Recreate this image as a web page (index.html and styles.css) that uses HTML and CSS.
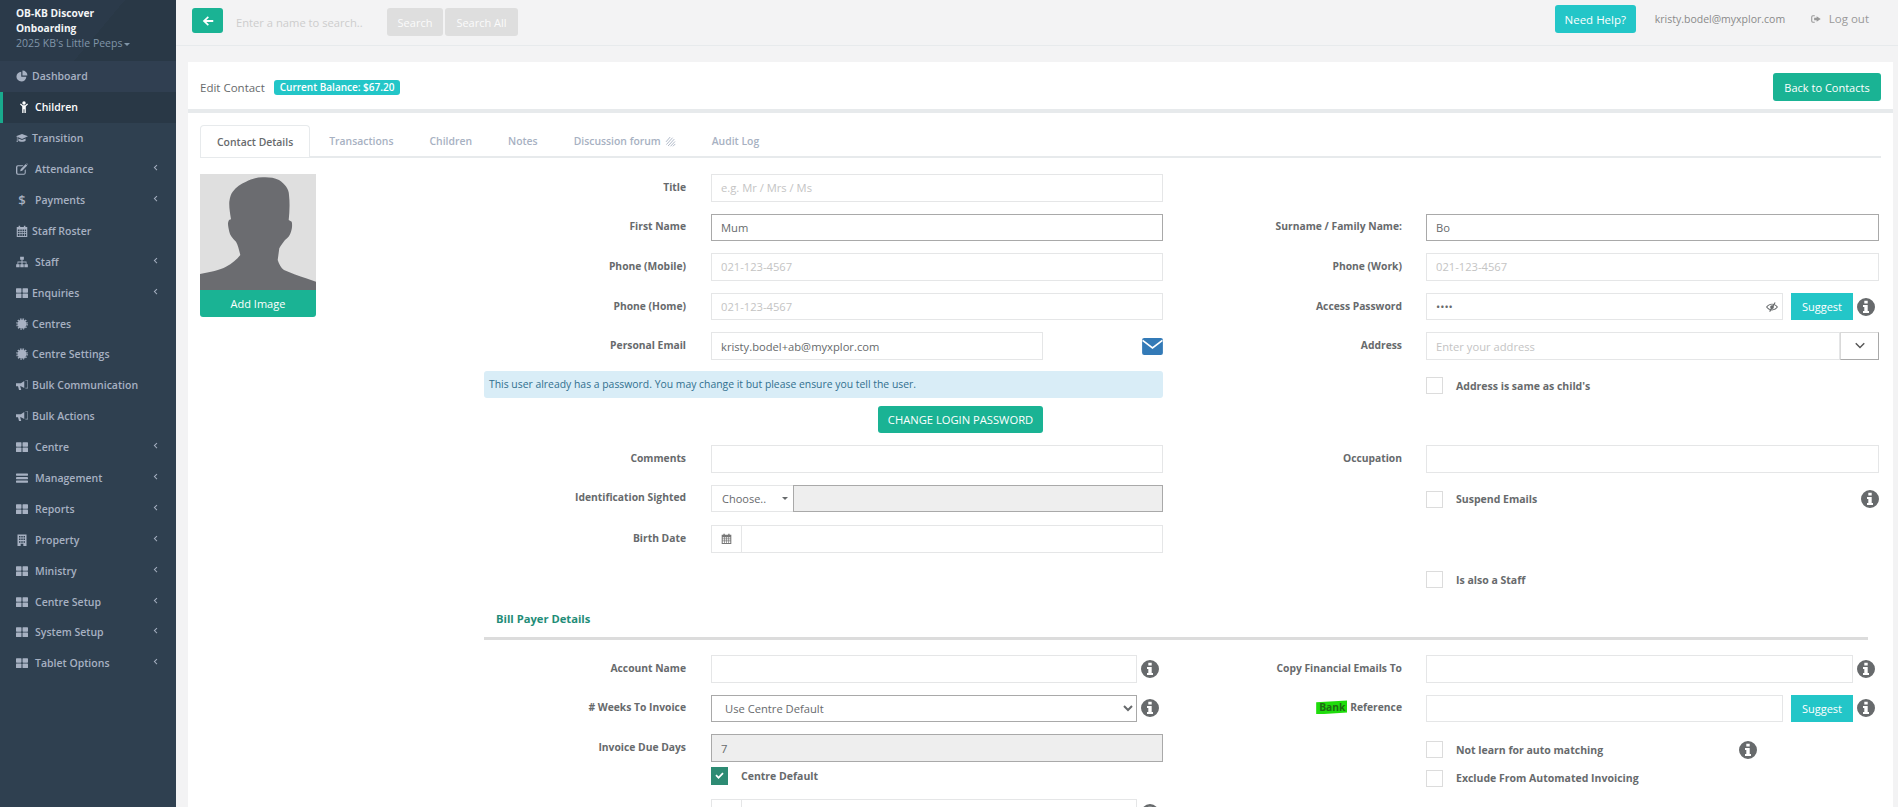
FILE: index.html
```html
<!DOCTYPE html>
<html lang="en">
<head>
<meta charset="utf-8">
<title>Edit Contact</title>
<link rel="stylesheet" href="styles.css">
</head>
<body>
<svg class="sprite" width="0" height="0" aria-hidden="true">
  <symbol id="i-pie" viewBox="0 0 16 16"><path d="M7 2.2a6.6 6.6 0 1 0 6.8 6.8H7z"/><path d="M8.6 .8v6.6h6.6A6.6 6.6 0 0 0 8.6 .8z"/></symbol>
  <symbol id="i-child" viewBox="0 0 16 16"><circle cx="8" cy="2.6" r="2.3"/><path d="M2.6 4.4l1.2-1.1 2.6 2.2h3.2l2.6-2.2 1.2 1.1-3 3V16H8.6v-5H7.4v5H5.6V7.4z"/></symbol>
  <symbol id="i-cap" viewBox="0 0 16 16"><path d="M8 2.5L0 5.8l8 3.4 8-3.4z"/><path d="M3.2 8.6v3c1.8 1.9 7.8 1.9 9.6 0v-3L8 10.7z"/><path d="M1.2 6.6h.8V11l.5 2.2H.7L1.2 11z"/></symbol>
  <symbol id="i-edit" viewBox="0 0 16 16"><path fill-rule="evenodd" d="M2.5 3H10L8.6 4.4H2.8A1 1 0 0 0 1.8 5.4v7.8a1 1 0 0 0 1 1h7.8a1 1 0 0 0 1-1V9.8l1.4-1.4v5A2.5 2.5 0 0 1 10.5 15.6h-8A2.5 2.5 0 0 1 0 13.100V5.500A2.500 2.500 0 0 1 2.500 3z"/><path d="M13 1.400l2 2-6.700 6.800-2.700.7.600-2.700zM13.800.700l.7-.5 1.300 1.300-.5.8z"/></symbol>
  <symbol id="i-cal" viewBox="0 0 16 16"><path fill-rule="evenodd" d="M1 2.500h2.500V1h2v1.500h5V1h2v1.500H15V16H1zM2.500 6v2h2.200V6zm3.200 0v2h2V6zm3 0v2h2V6zm3 0v2h1.800V6zm-9.200 3v2h2.200V9zm3.200 0v2h2V9zm3 0v2h2V9zm3 0v2h1.800V9zm-9.200 3v2.500h2.200V12zm3.200 0v2.500h2V12zm3 0v2.500h2V12zm3 0v2.500h1.800V12z"/></symbol>
  <symbol id="i-map" viewBox="0 0 16 16"><path d="M5.500 1h5v4h-1.800v2.300H14V11h1.800v4h-4.600v-4H13V8.500H8.700V11h1.600v4H5.700v-4h1.600V8.500H3V11h1.800v4H.2v-4H2V7.300h5.300V5H5.500z"/></symbol>
  <symbol id="i-grid" viewBox="0 0 16 16"><rect x="0" y="1.500" width="7.300" height="6" rx=".8"/><rect x="8.700" y="1.500" width="7.300" height="6" rx=".8"/><rect x="0" y="8.800" width="7.300" height="6" rx=".8"/><rect x="8.700" y="8.800" width="7.300" height="6" rx=".8"/></symbol>
  <symbol id="i-bars" viewBox="0 0 16 16"><rect y="2" width="16" height="3" rx=".6"/><rect y="6.700" width="16" height="3" rx=".6"/><rect y="11.400" width="16" height="3" rx=".6"/></symbol>
  <symbol id="i-cert" viewBox="0 0 16 16"><circle cx="8" cy="8" r="6"/><circle cx="8" cy="8" r="6.800" fill="none" stroke="currentColor" stroke-width="1.800" stroke-dasharray="2 1.560"/></symbol>
  <symbol id="i-horn" viewBox="0 0 16 16"><path d="M0 5.500h6.500L11 2.500v9.500L6.500 9.500H5.500L7 14.500H4L2.700 9.500H0z"/><path d="M12.500 1.500v.9l2.700 0v9.200h-2.700v.9H16V1.500z" opacity=".85"/></symbol>
  <symbol id="i-build" viewBox="0 0 16 16"><path fill-rule="evenodd" d="M2 .5h12V16H9.800v-3H6.200v3H2zM4 2.500v2h2v-2zm3 0v2h2v-2zm3 0v2h2v-2zM4 6v2h2V6zm3 0v2h2V6zm3 0v2h2V6zM4 9.500v2h2v-2zm3 0v2h2v-2zm3 0v2h2v-2z"/></symbol>
  <symbol id="i-out" viewBox="0 0 16 16"><path d="M6 3.500H3.200A1.200 1.200 0 0 0 2 4.700v6.600a1.200 1.200 0 0 0 1.200 1.200H6v1.500H3A2.800 2.800 0 0 1 .3 11.200V4.800A2.800 2.800 0 0 1 3 2H6z"/><path d="M9 3.500L15.500 8 9 12.500V10H5V6h4z"/></symbol>
  <symbol id="i-back" viewBox="0 0 16 16"><path d="M7.700 1.800l1.500 1.500L5.800 6.700H15v2.600H5.800l3.400 3.400-1.500 1.500L1 8z"/></symbol>
  <symbol id="i-mail" viewBox="0 0 22 18"><rect width="22" height="18" rx="2.200"/><path d="M.5 2.500L11 10.500 21.500 2.500" fill="none" stroke="#fff" stroke-width="1.800"/></symbol>
  <symbol id="i-info" viewBox="0 0 18 18"><path fill-rule="evenodd" d="M9 0a9 9 0 1 1 0 18A9 9 0 0 1 9 0zM7.300 2.800v2.600h3.400V2.800zM6 7v2h1.300v4H6v2h6v-2h-1.300V7z"/></symbol>
  <symbol id="i-eye" viewBox="0 0 16 16"><path fill-rule="evenodd" d="M8 3.500c3.400 0 6.300 2 8 4.500-1.700 2.500-4.600 4.500-8 4.500S1.700 10.500 0 8c1.700-2.500 4.600-4.500 8-4.500zm0 1.300C5.600 4.800 3.300 6.100 1.700 8c1.600 1.900 3.900 3.200 6.300 3.200S12.700 9.900 14.300 8C12.700 6.100 10.400 4.800 8 4.800z"/><path d="M11.500 1.500l1.300.8-7.300 12.200-1.300-.8z"/><circle cx="8" cy="8" r="2.500"/></symbol>
  <symbol id="i-down" viewBox="0 0 16 16"><path d="M2 2.800L8 8.600l6-5.800 1.600 1.600L8 12 .4 4.400z"/></symbol>
  <symbol id="i-check" viewBox="0 0 16 16"><path d="M2 8.300l1.800-1.800 2.800 2.800L12.200 3.500 14 5.300 6.600 13z"/></symbol>
  <symbol id="i-print" viewBox="0 0 16 16"><g fill="none" stroke="currentColor" stroke-width="1.300"><path d="M1.500 8.500l6-7"/><path d="M2 12.500L11 2.500"/><path d="M4.500 14.500l9-10"/><path d="M8 15l6.500-7"/><path d="M11.500 15l3.500-3.500"/></g></symbol>
</svg>

<div class="app">
  <aside class="sidebar">
    <div class="brand">
      <div class="brand-name">OB-KB Discover<br>Onboarding</div>
      <div class="brand-centre">2025 KB's Little Peeps<span class="caret caret-light"></span></div>
    </div>
    <nav class="nav">
      <a class="nav-item nav-first"><svg class="nav-icon"><use href="#i-pie"/></svg><span>Dashboard</span></a>
      <a class="nav-item nav-current"><svg class="nav-icon nav-icon-child"><use href="#i-child"/></svg><span>Children</span></a>
      <a class="nav-item"><svg class="nav-icon"><use href="#i-cap"/></svg><span>Transition</span></a>
      <a class="nav-item nav-sub"><svg class="nav-icon"><use href="#i-edit"/></svg><span>Attendance</span><i class="nav-arrow"></i></a>
      <a class="nav-item nav-sub"><span class="nav-glyph">$</span><span>Payments</span><i class="nav-arrow"></i></a>
      <a class="nav-item"><svg class="nav-icon"><use href="#i-cal"/></svg><span>Staff Roster</span></a>
      <a class="nav-item nav-sub"><svg class="nav-icon"><use href="#i-map"/></svg><span>Staff</span><i class="nav-arrow"></i></a>
      <a class="nav-item"><svg class="nav-icon"><use href="#i-grid"/></svg><span>Enquiries</span><i class="nav-arrow"></i></a>
      <a class="nav-item"><svg class="nav-icon"><use href="#i-cert"/></svg><span>Centres</span></a>
      <a class="nav-item"><svg class="nav-icon"><use href="#i-cert"/></svg><span>Centre Settings</span></a>
      <a class="nav-item"><svg class="nav-icon"><use href="#i-horn"/></svg><span>Bulk Communication</span></a>
      <a class="nav-item"><svg class="nav-icon"><use href="#i-horn"/></svg><span>Bulk Actions</span></a>
      <a class="nav-item nav-sub"><svg class="nav-icon"><use href="#i-grid"/></svg><span>Centre</span><i class="nav-arrow"></i></a>
      <a class="nav-item nav-sub"><svg class="nav-icon"><use href="#i-bars"/></svg><span>Management</span><i class="nav-arrow"></i></a>
      <a class="nav-item nav-sub"><svg class="nav-icon"><use href="#i-grid"/></svg><span>Reports</span><i class="nav-arrow"></i></a>
      <a class="nav-item nav-sub"><svg class="nav-icon"><use href="#i-build"/></svg><span>Property</span><i class="nav-arrow"></i></a>
      <a class="nav-item nav-sub"><svg class="nav-icon"><use href="#i-grid"/></svg><span>Ministry</span><i class="nav-arrow"></i></a>
      <a class="nav-item nav-sub"><svg class="nav-icon"><use href="#i-grid"/></svg><span>Centre Setup</span><i class="nav-arrow"></i></a>
      <a class="nav-item nav-sub"><svg class="nav-icon"><use href="#i-grid"/></svg><span>System Setup</span><i class="nav-arrow"></i></a>
      <a class="nav-item nav-sub"><svg class="nav-icon"><use href="#i-grid"/></svg><span>Tablet Options</span><i class="nav-arrow"></i></a>
    </nav>
  </aside>

  <div class="main">
    <header class="topbar">
      <button class="btn btn-green btn-back" type="button"><svg class="back-icon"><use href="#i-back"/></svg></button>
      <input class="top-search" type="text" placeholder="Enter a name to search..">
      <button class="btn btn-muted btn-search" type="button">Search</button>
      <button class="btn btn-muted btn-search-all" type="button">Search All</button>
      <button class="btn btn-teal btn-help" type="button">Need Help?</button>
      <span class="top-email">kristy.bodel@myxplor.com</span>
      <a class="top-logout"><svg class="logout-icon"><use href="#i-out"/></svg>Log out</a>
    </header>

    <section class="panel">
      <div class="panel-head">
        <div class="panel-title">Edit Contact <span class="balance">Current Balance: $67.20</span></div>
        <button class="btn btn-green btn-contacts" type="button">Back to Contacts</button>
      </div>
      <div class="panel-body">
        <ul class="tabs">
          <li class="tab tab-active">Contact Details</li>
          <li class="tab">Transactions</li>
          <li class="tab">Children</li>
          <li class="tab">Notes</li>
          <li class="tab">Discussion forum <svg class="tab-icon"><use href="#i-print"/></svg></li>
          <li class="tab">Audit Log</li>
        </ul>
        <div class="contact">
          <div class="photo">
            <svg class="photo-img" viewBox="0 0 116 116" aria-hidden="true">
              <rect width="116" height="116" fill="#dfdfdf"/>
              <path fill="#6b6c70" d="M0 100C10 98 20 96 26 92.700C32 90 37 85 40.300 81C39 76 38 71 36 67.700C32 64 30 61 29.300 57.700C28.500 54 27.500 50 28.300 47.700C28.800 46 30 45.300 31 45.300C30 39 29 33 29.300 27.700C30 23 31 20 32.700 17.700C36 13 41 10 46 7.700C51 5 57 3.300 62.700 3.300C68 3 74 3.500 79 6C85 10 89 15 89 21C90 30 89.500 38 88.700 46L91.700 47.700C92.500 51 92 55 91 57.700C90 61 88 64 85 66C83 69 81 71 79.300 74.300L77.700 86C79 90 81 94 84 96C91 99 99 102 106 104.300L116 107.700V116H0Z"/>
            </svg>
            <button class="btn btn-green btn-image" type="button">Add Image</button>
          </div>

          <div class="form">
            <div class="form-cols form-cols-top">
              <div class="col col-left">
                <div class="field"><label>Title</label><input type="text" placeholder="e.g. Mr / Mrs / Ms"></div>
                <div class="field"><label>First Name</label><input class="strong" type="text" value="Mum"></div>
                <div class="field"><label>Phone (Mobile)</label><input type="text" placeholder="021-123-4567"></div>
                <div class="field"><label>Phone (Home)</label><input type="text" placeholder="021-123-4567"></div>
                <div class="field field-tight"><label>Personal Email</label>
                  <div class="control">
                    <input class="email-input" type="text" value="kristy.bodel+ab@myxplor.com">
                    <svg class="mail-icon"><use href="#i-mail"/></svg>
                  </div>
                </div>
                <div class="notice">This user already has a password. You may change it but please ensure you tell the user.</div>
                <div class="password-action"><button class="btn btn-green btn-password" type="button">CHANGE LOGIN PASSWORD</button></div>
                <div class="field"><label>Comments</label><input type="text"></div>
                <div class="field field-identification"><label>Identification Sighted</label>
                  <div class="control control-joined">
                    <div class="choose">Choose..<span class="caret caret-dark"></span></div>
                    <input class="readonly" type="text" disabled>
                  </div>
                </div>
                <div class="field"><label>Birth Date</label>
                  <div class="control control-joined">
                    <span class="addon"><svg class="addon-icon"><use href="#i-cal"/></svg></span>
                    <input class="date-input" type="text">
                  </div>
                </div>
              </div>

              <div class="col col-right">
                <div class="field field-blank"></div>
                <div class="field"><label>Surname / Family Name:</label><input class="strong" type="text" value="Bo"></div>
                <div class="field"><label>Phone (Work)</label><input type="text" placeholder="021-123-4567"></div>
                <div class="field"><label>Access Password</label>
                  <div class="control">
                    <div class="password-box">
                      <input type="password" value="abcd">
                      <svg class="eye-icon"><use href="#i-eye"/></svg>
                    </div>
                    <button class="btn btn-teal btn-suggest" type="button">Suggest</button>
                    <span class="info-cell"><svg class="info-icon"><use href="#i-info"/></svg></span>
                  </div>
                </div>
                <div class="field"><label>Address</label>
                  <div class="control control-joined">
                    <input class="address-input" type="text" placeholder="Enter your address">
                    <span class="address-toggle"><svg class="down-icon"><use href="#i-down"/></svg></span>
                  </div>
                </div>
                <div class="check-row check-address"><span class="box"></span><span class="check-label">Address is same as child's</span></div>
                <div class="field field-occupation"><label>Occupation</label><input type="text"></div>
                <div class="check-row check-suspend"><span class="box"></span><span class="check-label">Suspend Emails</span><svg class="info-icon info-end"><use href="#i-info"/></svg></div>
                <div class="check-row check-staff"><span class="box"></span><span class="check-label">Is also a Staff</span></div>
              </div>
            </div>

            <h3 class="section-title">Bill Payer Details</h3>
            <hr class="section-rule">

            <div class="form-cols">
              <div class="col col-left">
                <div class="field"><label>Account Name</label>
                  <div class="control"><input type="text"><span class="info-cell"><svg class="info-icon"><use href="#i-info"/></svg></span></div>
                </div>
                <div class="field"><label># Weeks To Invoice</label>
                  <div class="control">
                    <select class="weeks"><option>Use Centre Default</option></select>
                    <span class="info-cell"><svg class="info-icon"><use href="#i-info"/></svg></span>
                  </div>
                </div>
                <div class="field field-due"><label>Invoice Due Days</label><input class="readonly" type="text" value="7" disabled></div>
                <div class="check-row check-default"><span class="box box-on"><svg class="check-icon"><use href="#i-check"/></svg></span><span class="check-label">Centre Default</span></div>
                <div class="field"><label></label>
                  <div class="control">
                    <div class="control-joined date-group">
                      <span class="addon"><svg class="addon-icon"><use href="#i-cal"/></svg></span>
                      <input class="date-input" type="text">
                    </div>
                    <span class="info-cell"><svg class="info-icon"><use href="#i-info"/></svg></span>
                  </div>
                </div>
              </div>
              <div class="col col-right">
                <div class="field"><label>Copy Financial Emails To</label>
                  <div class="control"><input type="text"><span class="info-cell"><svg class="info-icon"><use href="#i-info"/></svg></span></div>
                </div>
                <div class="field"><label><span class="marker">Bank</span> Reference</label>
                  <div class="control">
                    <input type="text">
                    <button class="btn btn-teal btn-suggest" type="button">Suggest</button>
                    <span class="info-cell"><svg class="info-icon"><use href="#i-info"/></svg></span>
                  </div>
                </div>
                <div class="check-row check-learn"><span class="box"></span><span class="check-label check-label-wide">Not learn for auto matching</span><svg class="info-icon"><use href="#i-info"/></svg></div>
                <div class="check-row check-exclude"><span class="box"></span><span class="check-label">Exclude From Automated Invoicing</span></div>
              </div>
            </div>
          </div>
        </div>
      </div>
    </section>
  </div>
</div>
</body>
</html>
```

FILE: styles.css
```css
* { box-sizing: border-box; }
html, body { margin: 0; height: 100%; overflow: hidden; }
body { font-family: "Open Sans", "Liberation Sans", sans-serif; font-size: 11px; color: #676a6c; background: #f3f3f4; }
.sprite { display: block; width: 0; height: 0; }
svg { fill: currentColor; }

.app { display: flex; height: 807px; overflow: hidden; }

/* Sidebar */
.sidebar { width: 176px; flex: none; background: #2f4050; color: #a7b1c2; }
.brand { height: 61px; padding: 6px 16px 0; line-height: 15px; background: linear-gradient(130deg, #2b3a4a 0 55%, #293846 55% 100%); }
.brand-name { color: #f3f5f7; font-weight: 700; font-size: 10.200px; }
.brand-centre { color: #8095a8; font-size: 10.500px; }
.caret { display: inline-block; width: 0; height: 0; border-left: 3px solid transparent; border-right: 3px solid transparent; border-top: 3px solid #8095a8; vertical-align: middle; }
.caret-light { margin-left: 2px; }
.caret-dark { border-top-color: #676a6c; margin-left: auto; }

.nav-item { display: flex; align-items: center; height: 30.900px; padding: 0 16px; font-weight: 600; font-size: 10.500px; white-space: nowrap; }
.nav-first { background: #303f51; }
.nav-icon { width: 12px; height: 12px; flex: none; margin-right: 4px; }
.nav-sub .nav-icon { margin-right: 7px; }
.nav-glyph { width: 12px; margin-right: 7px; text-align: center; font-size: 13px; }
.nav-current { background: #293846; color: #fff; border-left: 3px solid #19aa8d; padding-left: 15px; }
.nav-current .nav-icon-child { margin-right: 5px; }
.nav-arrow { width: 4px; height: 4px; margin-left: auto; border-left: 1px solid #a7b1c2; border-bottom: 1px solid #a7b1c2; transform: rotate(45deg) translate(-2px, 0); }

/* Main column */
.main { flex: 1; min-width: 0; padding: 0 5px 0 12px; }

.topbar { display: flex; align-items: flex-start; height: 46px; margin: 0 -5px 0 -12px; border-bottom: 1px solid #e7eaec; padding-left: 16px; }
.btn { border: 0; border-radius: 3px; color: #fff; font: 400 11px "Open Sans", "Liberation Sans", sans-serif; padding: 0; white-space: nowrap; }
.btn-green { background: #1ab394; }
.btn-teal { background: #23c6c8; }
.btn-muted { background: #dedede; color: #fbfbfb; }
.btn-back { width: 31px; height: 25px; margin-top: 8px; display: flex; align-items: center; justify-content: center; }
.back-icon { width: 12px; height: 12px; }
.top-search { width: 164px; height: 28px; margin: 8px 0 0 0; padding: 0 0 0 13px; border: 0; background: transparent; font: 400 11.200px "Open Sans", sans-serif; }
.top-search::placeholder { color: #cdcdcd; }
.btn-search { width: 56px; height: 28px; margin-top: 8px; }
.btn-search-all { width: 73px; height: 28px; margin: 8px 0 0 2px; }
.btn-help { width: 81px; height: 28px; margin: 5px 0 0 auto; font-size: 11.500px; }
.top-email { margin: 12px 0 0 19px; width: 156px; line-height: 15px; color: #8a8a8a; font-size: 10.500px; }
.top-logout { display: flex; align-items: center; margin: 11px 29px 0 0; color: #999; font-size: 11.500px; line-height: 16px; }
.logout-icon { width: 10px; height: 10px; margin-right: 8px; color: #999; }

.panel { margin-top: 16px; background: #fff; height: 745px; overflow: hidden; }
.panel-head { display: flex; justify-content: space-between; align-items: flex-start; height: 51px; padding: 11px 12px 0; border-bottom: 4px solid #e7eaec; }
.panel-title { display: flex; align-items: center; height: 28px; font-size: 11.500px; color: #676a6c; }
.balance { margin-left: 9px; padding: 0 6px; height: 15px; line-height: 15px; border-radius: 3px; background: #23c6c8; color: #fff; font-size: 10px; font-weight: 600; }
.btn-contacts { width: 108px; height: 28px; }

.panel-body { padding: 12px 12px 0; }
.tabs { display: flex; list-style: none; margin: 0; padding: 0; height: 33px; border-bottom: 2px solid #e7eaec; }
.tab { height: 32px; padding: 0 17px; margin-right: 2px; line-height: 30px; color: #a7b1c2; font-weight: 600; font-size: 10.400px; white-space: nowrap; display: flex; align-items: center; }
.tab-active { color: #676a6c; background: #fff; border: 1px solid #e7eaec; border-bottom: 0; border-radius: 4px 4px 0 0; padding: 0 16px; }
.tab-icon { width: 11px; height: 11px; margin-left: 4px; }

.contact { display: flex; padding-top: 16px; }
.photo { width: 116px; flex: none; margin-right: 168px; }
.photo-img { display: block; width: 116px; height: 116px; }
.btn-image { display: block; width: 116px; height: 27px; border-radius: 0 0 3px 3px; font-size: 11px; }

.form { flex: 1; min-width: 0; }
.form-cols { display: flex; gap: 32px; }
.col-left { width: 679px; flex: none; --label: 202px; --gap: 25px; }
.col-right { width: 684px; flex: none; --label: 207px; --gap: 24px; }

.field { display: grid; grid-template-columns: var(--label) 1fr; column-gap: var(--gap); align-items: center; height: 27.600px; margin-bottom: 12px; }
.field label { text-align: right; font-weight: 700; font-size: 10.300px; color: #676a6c; padding-bottom: 2px; }
.field input, .field select { width: 100%; height: 100%; min-width: 0; }
input, select { border: 1px solid #e5e6e7; background: #fff; color: #676a6c; padding: 0 9px; font: 400 11.200px "Open Sans", "Liberation Sans", sans-serif; border-radius: 0; outline: 0; }
input::placeholder { color: #c4c4c4; }
input.strong, select.weeks { border-color: #a9a9a9; }
input.readonly { background: #eee; border-color: #a9a9a9; }
.control { display: flex; align-items: center; height: 100%; min-width: 0; }
.control-joined { display: flex; align-items: center; height: 100%; }
.field-tight { margin-bottom: 11px; }
.field-identification { margin-bottom: 12.800px; }
.email-input.email-input { width: 332px; }
.mail-icon { width: 21px; height: 17px; margin-left: auto; color: #337ab7; }

.notice { height: 27px; line-height: 27px; padding-left: 5px; border-radius: 3px; background: #d9edf7; color: #31708f; font-size: 10.400px; }
.password-action { display: flex; justify-content: flex-end; padding: 8px 120px 12px 0; }
.btn-password { width: 165px; height: 27px; font-size: 11.200px; }

.choose { display: flex; align-items: center; width: 82px; height: 100%; flex: none; padding: 0 5px 0 10px; border: 1px solid #e5e6e7; border-right: 0; font-size: 11px; }
.addon { display: flex; align-items: center; justify-content: center; width: 30px; height: 100%; flex: none; border: 1px solid #e5e6e7; border-right: 0; }
.addon-icon { width: 11px; height: 11px; color: #777; }

.password-box { position: relative; flex: 1; height: 100%; min-width: 0; }
.eye-icon { position: absolute; right: 5px; top: 8px; width: 12px; height: 12px; color: #676a6c; }
.btn-suggest { flex: none; width: 62px; height: 100%; margin-left: 8px; border-radius: 0; font-size: 11px; }
.info-cell { display: flex; justify-content: center; width: 26px; flex: none; }
.info-icon { width: 18px; height: 18px; flex: none; color: #676a6c; }
.address-toggle { display: flex; align-items: center; justify-content: center; width: 39px; height: 100%; flex: none; border: 1px solid #a9a9a9; border-top: 1px solid #d9d9d9; border-left: 1px solid #d9d9d9; }
.down-icon { width: 10px; height: 10px; color: #555; }
.date-group { flex: 1; min-width: 0; }

.check-row { display: flex; align-items: center; }
.col-right .check-row { margin-left: 231px; }
.col-left .check-row { margin-left: 227px; }
.box { display: flex; align-items: center; justify-content: center; width: 17px; height: 17px; flex: none; margin-right: 13px; border: 1px solid #dcdcdc; background: #fff; }
.box-on { background: #2d8b73; border-color: #2d8b73; height: 18px; }
.check-icon { width: 11px; height: 11px; color: #fff; }
.check-label { font-weight: 700; font-size: 10.500px; color: #676a6c; }
.check-label-wide { width: 283px; }
.info-end { margin-left: auto; margin-right: 0; }

.check-address { margin-top: 17.500px; margin-bottom: 51px; }
.field-occupation { margin-bottom: 17px; }
.check-suspend { margin-bottom: 63px; }
.check-staff { margin-bottom: 0; }

.section-title { margin: 23px 0 0; padding-left: 12px; height: 16px; line-height: 16px; font-size: 11.200px; font-weight: 700; color: #1f8d78; }
.section-rule { margin: 10px 13px 15px 0; height: 3px; border: 0; background: #dcdcdc; }
.field-due { margin-bottom: 5px; }
.check-default { margin-bottom: 14px; }
.check-learn { margin-top: 18.600px; margin-bottom: 11px; }
.marker { display: inline-block; padding: 0 2px 0 3px; background: #1fdc0c; color: #1d6a14; font-weight: 700; clip-path: polygon(0 12%, 100% 0, 100% 86%, 0 100%); }
.weeks { padding-left: 9px; }
```
